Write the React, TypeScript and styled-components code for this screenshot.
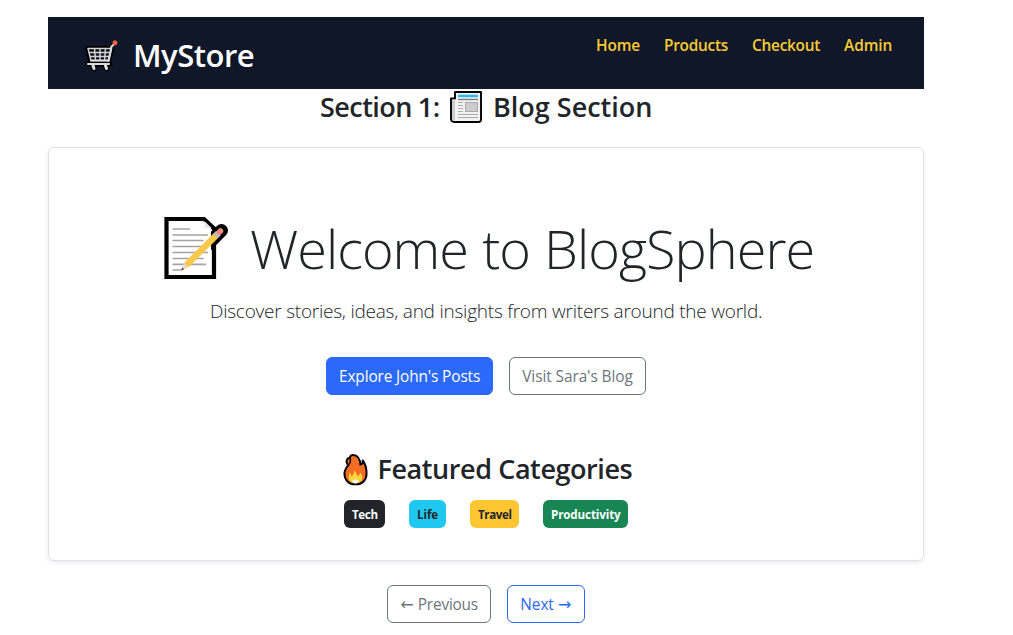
import React from 'react';
import styled, { createGlobalStyle } from 'styled-components';

const GlobalStyle = createGlobalStyle`
  * { box-sizing: border-box; }
  html, body { margin: 0; background: #fff; overflow: hidden; }
  body {
    font-family: "Segoe UI", "Open Sans", "Noto Sans", sans-serif;
    font-size: 15.4px;
    color: #212529;
    line-height: 24px;
  }
  h1, h2, h3, p { margin: 0; }
`;

const Page = styled.div`
  width: 876px;
  height: 635px;
  margin-left: 48px;
  padding-top: 17px;
`;

const Header = styled.header`
  display: flex;
  justify-content: space-between;
  align-items: flex-start;
  height: 72px;
  padding: 17px 32px 0 36px;
  background: #0f1729;
`;

const Brand = styled.div`
  display: flex;
  align-items: center;
  gap: 13px;
  padding-top: 2px;
`;

const Line = styled.span<{ $w: number; $ls?: number }>`
  display: block;
  flex: none;
  width: ${(p) => p.$w}px;
  letter-spacing: ${(p) => p.$ls ?? 0}px;
  white-space: nowrap;
`;

const BrandName = styled.h1`
  font-size: 31px;
  font-weight: 600;
  line-height: 38px;
  color: #fff;
  padding-bottom: 2px;
`;

const Nav = styled.nav`
  display: flex;
  gap: 24px;
`;

const NavLink = styled.a`
  font-weight: 600;
  line-height: 24px;
  color: #fbcb34;
`;

const SectionTitle = styled.h2`
  display: flex;
  align-items: center;
  justify-content: center;
  height: 36px;
  font-size: 27px;
  font-weight: 600;
  line-height: 34px;
`;

const SectionNumber = styled(Line)`
  word-spacing: -0.5px;
`;

const SectionName = styled(Line)`
  padding-left: 10px;
`;

const Card = styled.section`
  display: flex;
  flex-direction: column;
  align-items: center;
  height: 414px;
  margin-top: 22px;
  border: 1px solid #dee2e6;
  border-radius: 6px;
  box-shadow: 0 2px 4px rgba(0, 0, 0, 0.075);
`;

const HeroTitle = styled.h2`
  display: flex;
  align-items: center;
  gap: 22px;
  height: 68px;
  margin-top: 66px;
  padding-left: 1px;
  font-size: 54px;
  font-weight: 300;
  line-height: 66px;
  word-spacing: 1px;
`;

const Lead = styled.p`
  margin-top: 14px;
  font-size: 19px;
  font-weight: 300;
  line-height: 30px;
`;

const ButtonRow = styled.div`
  display: flex;
  justify-content: center;
  gap: 16px;
`;

const HeroButtons = styled(ButtonRow)`
  margin-top: 31px;
`;

const Pager = styled(ButtonRow)`
  margin-top: 24px;
`;

const tones = {
  primary: { bg: '#2a69fa', fg: '#fff', line: '#2a69fa' },
  gray: { bg: '#fff', fg: '#6c757d', line: '#6c757d' },
  blue: { bg: '#fff', fg: '#2a69f5', line: '#2a69f5' },
};

const Button = styled.button<{ $tone: keyof typeof tones }>`
  display: flex;
  align-items: center;
  height: 38px;
  padding: 2px 12px 0;
  border: 1px solid ${(p) => tones[p.$tone].line};
  border-radius: 6px;
  background: ${(p) => tones[p.$tone].bg};
  color: ${(p) => tones[p.$tone].fg};
  font: inherit;
`;

const Arrow = styled.span`
  display: inline-block;
  width: 14px;
  font-family: "DejaVu Sans", sans-serif;
  font-size: 16px;
  line-height: 20px;
  letter-spacing: 0;
`;

const Categories = styled.h3`
  display: flex;
  align-items: center;
  gap: 10px;
  height: 34px;
  margin-top: 57px;
  padding-left: 2px;
  font-size: 27px;
  font-weight: 600;
  line-height: 34px;
`;

const Badges = styled.div`
  display: flex;
  gap: 24px;
  margin-top: 14px;
`;

const Badge = styled.span<{ $bg: string; $fg: string }>`
  height: 28px;
  padding: 0 8px;
  border-radius: 6px;
  background: ${(p) => p.$bg};
  color: ${(p) => p.$fg};
  font-size: 11.6px;
  font-weight: 700;
  line-height: 29px;
`;

const CartIcon = () => (
  <svg width="36" height="36" viewBox="0 0 36 36" fill="none" strokeLinecap="round" strokeLinejoin="round">
    <g stroke="#000" strokeWidth="5">
      <path d="M31.500 4.500l-3 2.500-4 17H6M3.500 10.500l3 12h18l3-12zM4 26h22" />
      <path d="M9 28l1 3M21.500 28l1 3M10 31v-3" />
    </g>
    <path d="M4 10.500h23.500l-3 12H7zM5 14.500h21M6 18.500h19M10.500 10.500l1 12M16 10.500v12M21.500 10.500l-1 12" stroke="#d2d2d2" strokeWidth="1.500" />
    <path d="M30.500 6l-3 2.500-3 14.500M7 22.500h17M4 26h21" stroke="#dadada" strokeWidth="2.200" />
    <path d="M9 27.500l1 3M21.500 27.500l1 3" stroke="#e0e0e0" strokeWidth="3" />
    <circle cx="31" cy="4.800" r="2.500" fill="#f0644a" />
  </svg>
);

const NewsIcon = () => (
  <svg width="34" height="34" viewBox="0 0 34 34">
    <path d="M6 2h26v27.500a2.500 2.500 0 0 1-2.500 2.500H5a3 3 0 0 1-3-3V8.500h4z" fill="#f2f2f2" stroke="#000" strokeWidth="1.900" strokeLinejoin="round" />
    <path d="M3 9.500h3V29c0 2-3 2-3 0z" fill="#ccc" />
    <path d="M9 6h20" stroke="#30b8e8" strokeWidth="2.600" />
    <path d="M9 9.500h20" stroke="#777" strokeWidth="1.300" />
    <path d="M9 12.500h5M9 15.500h5M9 18.500h5M9 21.500h5M9 24.500h20M9 27.500h20" stroke="#aaa" strokeWidth="1" />
    <rect x="16.500" y="12.500" width="12" height="9" fill="#ccc" stroke="#aaa" />
  </svg>
);

const MemoIcon = () => (
  <svg width="66" height="66" viewBox="0 0 66 66">
    <defs>
      <clipPath id="pencilEdge"><path d="M49 0h17v40H49z" /></clipPath>
    </defs>
    <path d="M4.500 4H42L52 13.500V62H4.500z" fill="#fff" stroke="#000" strokeWidth="4.200" />
    <path d="M42.500 6v7h7z" fill="#e6e6e6" />
    <path d="M26 49L59.500 15.500" stroke="#000" strokeWidth="13" strokeLinecap="round" clipPath="url(#pencilEdge)" />
    <path d="M10.500 14h17.500M10.500 20h35.500M10.500 25.500h31M10.500 31.500h35.500M10.500 37.500h35.500M10.500 43.500h31M10.500 49.300h33.500M10.500 55h9" stroke="#a3a3a3" strokeWidth="1.700" />
    <path d="M19.500 55l2.500-7 5 4.500z" fill="#f5d5bd" />
    <path d="M19 55.500l1.300-3 2 1.800z" fill="#444" />
    <path d="M24.500 50L54 20.500" stroke="#fac94b" strokeWidth="6.500" />
    <path d="M53.500 21l3-3" stroke="#bdbdbd" strokeWidth="6.500" />
    <path d="M57.500 17l1-1" stroke="#f58b7d" strokeWidth="5.500" strokeLinecap="round" />
  </svg>
);

const FireIcon = () => (
  <svg width="25" height="33" viewBox="0 0 26 34">
    <path d="M10 2c5 0 8 4 8 10l2-1c.5-1.500.5-2.500.5-3.500 2.500 3 4 8 4 14 0 6.500-4.500 11-11.500 11S1.500 28 1.500 21.500c0-4 1.500-6 4-9C4 11 3.500 8 4.500 6c.6-1 1.500-1 2.500-1C7.500 3 8.500 2 10 2z" fill="#f36d24" stroke="#000" strokeWidth="2" strokeLinejoin="round" />
    <path d="M7 5c1.500 3 1 5-1.500 7.500" fill="none" stroke="#000" strokeWidth="1.500" />
    <path d="M7 20c1 1 1.500 2.500 2 4.500 1.500-2 3-3.500 2.500-6.500 2 1.500 3 4 3.500 6 1.500-.5 2.500-2 3.500-3.500 1.500 3 2 5 1.500 6.500-.8 3-3 4-6.500 4-5 0-7.500-2-7.500-5.500 0-2 .5-3.500 1-5.500z" fill="#fdd63b" />
    <path d="M9.500 28l2 1 1.500-2.500 1.500 2 1.500-1c0 3-1 4-3 4s-3.500-1-3.500-3.500z" fill="#fff" />
  </svg>
);

const nav = [
  { label: 'Home', w: 44, ls: -0.1 },
  { label: 'Products', w: 64, ls: -0.25 },
  { label: 'Checkout', w: 68, ls: -0.25 },
  { label: 'Admin', w: 48, ls: -0.05 },
];

const badges = [
  { label: 'Tech', w: 25, ls: -0.35, bg: '#212529', fg: '#fff' },
  { label: 'Life', w: 21, ls: -0.1, bg: '#20c8ef', fg: '#212529' },
  { label: 'Travel', w: 33, ls: -0.4, bg: '#ffc634', fg: '#212529' },
  { label: 'Productivity', w: 69, ls: -0.12, bg: '#178654', fg: '#fff' },
];

export default function App() {
  return (
    <>
      <GlobalStyle />
      <Page>
        <Header>
          <Brand>
            <CartIcon />
            <BrandName><Line $w={120} $ls={-0.5}>MyStore</Line></BrandName>
          </Brand>
          <Nav>
            {nav.map((n) => (
              <NavLink key={n.label}><Line $w={n.w} $ls={n.ls}>{n.label}</Line></NavLink>
            ))}
          </Nav>
        </Header>
        <SectionTitle>
          <SectionNumber $w={129} $ls={-0.55}>Section 1:</SectionNumber>
          <NewsIcon />
          <SectionName $w={169}>Blog Section</SectionName>
        </SectionTitle>
        <Card>
          <HeroTitle>
            <MemoIcon />
            <Line $w={561} $ls={-0.95}>Welcome to BlogSphere</Line>
          </HeroTitle>
          <Lead><Line $w={552} $ls={-0.23}>Discover stories, ideas, and insights from writers around the world.</Line></Lead>
          <HeroButtons>
            <Button $tone="primary"><Line $w={141} $ls={-0.13}>Explore John's Posts</Line></Button>
            <Button $tone="gray"><Line $w={111} $ls={-0.07}>Visit Sara's Blog</Line></Button>
          </HeroButtons>
          <Categories>
            <FireIcon />
            <Line $w={254} $ls={-0.42}>Featured Categories</Line>
          </Categories>
          <Badges>
            {badges.map((b) => (
              <Badge key={b.label} $bg={b.bg} $fg={b.fg}><Line $w={b.w} $ls={b.ls}>{b.label}</Line></Badge>
            ))}
          </Badges>
        </Card>
        <Pager>
          <Button $tone="gray"><Line $w={78} $ls={-0.2}><Arrow>←</Arrow> Previous</Line></Button>
          <Button $tone="blue"><Line $w={52} $ls={-0.1}>Next <Arrow>→</Arrow></Line></Button>
        </Pager>
      </Page>
    </>
  );
}
